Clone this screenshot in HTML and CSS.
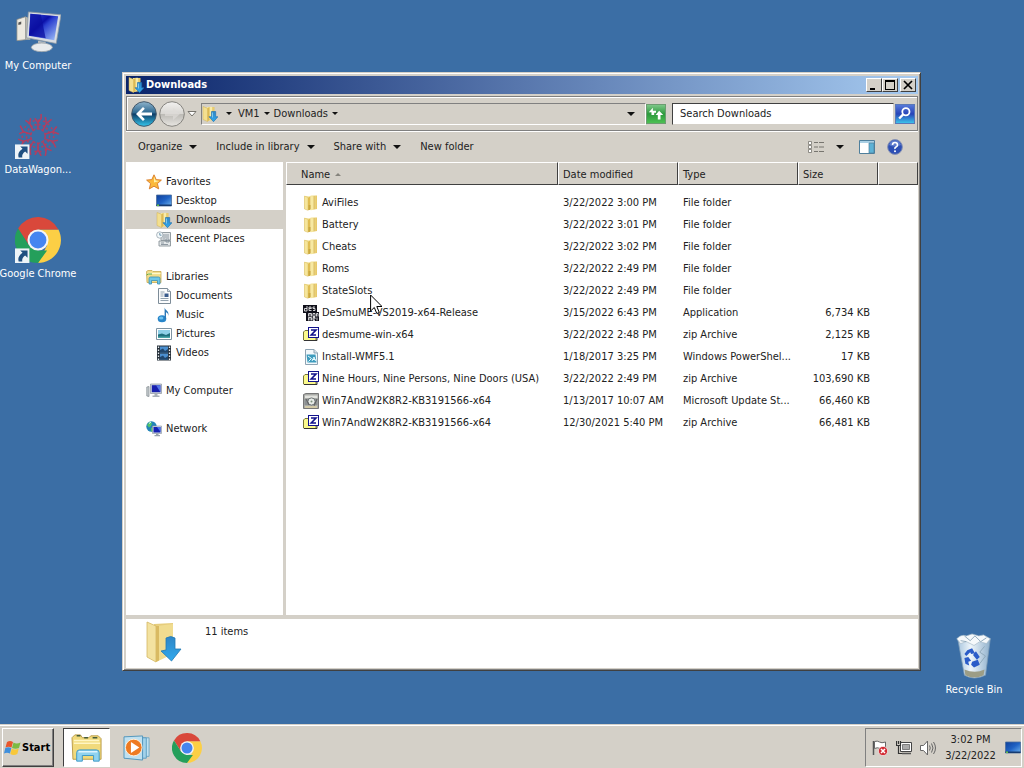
FILE: index.html
```html
<!DOCTYPE html>
<html lang="en">
<head>
  <meta charset="UTF-8">
  <meta name="viewport" content="width=device-width, initial-scale=1.0">
  <title>Downloads</title>
  <link rel="stylesheet" href="styles.css">
</head>
<body>

  <!-- Icon sprite -->
  <svg class="sprite" aria-hidden="true">
    <defs>
      <linearGradient id="gFolder" x1="0" x2="1" y1="0" y2="0">
        <stop offset="0" stop-color="#f7e9a4"/><stop offset="1" stop-color="#e6c766"/>
      </linearGradient>
      <linearGradient id="gArrow" x1="0" x2="0" y1="0" y2="1">
        <stop offset="0" stop-color="#2f86c6"/><stop offset="1" stop-color="#2fa9ee"/>
      </linearGradient>
      <linearGradient id="gScreen" x1="0" x2="1" y1="0" y2="1">
        <stop offset="0" stop-color="#3d5be8"/><stop offset=".4" stop-color="#0a0fa8"/><stop offset=".5" stop-color="#2a3fd0"/><stop offset="1" stop-color="#a8c8fa"/>
      </linearGradient>
      <linearGradient id="gBack" x1="0" x2="0" y1="0" y2="1">
        <stop offset="0" stop-color="#8fb4cc"/><stop offset=".45" stop-color="#2d6890"/><stop offset=".5" stop-color="#0d3c66"/><stop offset="1" stop-color="#35c8ee"/>
      </linearGradient>
      <linearGradient id="gFwd" x1="0" x2="0" y1="0" y2="1">
        <stop offset="0" stop-color="#f2f1ef"/><stop offset=".48" stop-color="#d9d7d3"/><stop offset=".52" stop-color="#bdbbb6"/><stop offset="1" stop-color="#e8e6e2"/>
      </linearGradient>
      <linearGradient id="gBin" x1="0" x2="1" y1="0" y2="0">
        <stop offset="0" stop-color="#a9c6df"/><stop offset=".4" stop-color="#eef5fa"/><stop offset="1" stop-color="#8fb0cc"/>
      </linearGradient>
      <linearGradient id="gDesk" x1="0" x2="1" y1="0" y2="1">
        <stop offset="0" stop-color="#0f3f9a"/><stop offset=".5" stop-color="#1f62c4"/><stop offset="1" stop-color="#6fb4ee"/>
      </linearGradient>
    </defs>

    <symbol id="folder" viewBox="0 0 16 16">
      <path d="M1.500 1L7 1.500V15l-5.500-1z" fill="#f3e08e"/>
      <path d="M7.500.5H14v13.500l-6.500 1.200z" fill="url(#gFolder)"/>
      <path d="M1.500 1l3.500 1.500v12.800L1.500 14z" fill="#f6e69c" stroke="#d9bd62" stroke-width=".5"/>
      <path d="M5 3l2.500-2v13L5 15.300z" fill="#e0bd52"/>
      <path d="M8 2l3-1v13l-3 1.200z" fill="#f7e9a2"/>
      <path d="M11 1v13.200" stroke="#cfae50" stroke-width=".7"/>
      <path d="M5.500 10h2v4.500l-2 .7z" fill="#c9a840"/>
    </symbol>

    <symbol id="folder-down" viewBox="0 0 16 16">
      <path d="M5 1h7.500v13L5 15.300z" fill="url(#gFolder)"/>
      <path d="M7.500.8h2.500v12H7.500z" fill="#f8ebaa"/>
      <path d="M1 .5l4.500 1.800v13.200L1 13.500z" fill="#f3df90" stroke="#d2b253" stroke-width=".5"/>
      <path d="M5.500 2.300L7.500 1v13l-2 1.500z" fill="#dcb954"/>
      <path d="M9.500 5.500h4.200v5.200H16l-4.500 5-4.500-5h2.500z" fill="url(#gArrow)" stroke="#1b6fae" stroke-width=".6"/>
      <path d="M10.500 6.500v5" stroke="#8fd4f6" stroke-width=".8"/>
    </symbol>

    <symbol id="zip" viewBox="0 0 16 16">
      <path d="M.5 13V5L2 3.500h3L6.500 5H13v8.500H1z" fill="#fbf98c" stroke="#77763a"/>
      <path d="M1 13.500h13V10" fill="none" stroke="#333"/>
      <rect x="5.500" y=".5" width="10" height="10" fill="#fff" stroke="#12128c"/>
      <path d="M8 3h5L8.200 8H13" fill="none" stroke="#12128c" stroke-width="1.600"/>
    </symbol>

    <symbol id="des" viewBox="0 0 16 16">
      <path d="M0 0h14v7h2v9H3V8H0z" fill="#10101a"/>
      <path d="M4 1v5H1.500V3.500H4M8.500 3.500H6v2h2.500M6 3.500V2h2v1.500M12 2H10v1.500h2v2h-2M5.500 11.500v-3h3v3M7 8.500v3M10 8.500h2v3h-2zM13.500 11.500v-3H15v3M5.500 15.500v-3h3v3M7 12.500v3M12 14h-2v1.500h2M10 14v-1.500h2V14M14 12.500v3" fill="none" stroke="#fff" stroke-width=".8"/>
    </symbol>

    <symbol id="script" viewBox="0 0 16 16">
      <path d="M2.500.5h8.500l3.500 3.500v11.500h-12z" fill="#f3f8fb" stroke="#8da3b3"/>
      <path d="M11 .5V4h3.500" fill="#d5e2ea" stroke="#8da3b3"/>
      <path d="M3.500 5.500h9l1 8h-9z" fill="#3d9bbd"/>
      <path d="M5 7l3.500 2.500L5.500 12.500M9 12l2-4 1.500 4M9.500 10.500h3" fill="none" stroke="#e6fbff"/>
    </symbol>

    <symbol id="update" viewBox="0 0 16 16">
      <path d="M.5 1.500L3 .5h12.500v15H.5z" fill="#aaaca8" stroke="#777"/>
      <path d="M2 2.500h12.500V5H2z" fill="#e2e3de"/>
      <path d="M1.500 6h13v6h-13z" fill="#8c9092"/>
      <circle cx="8.500" cy="8.500" r="3.600" fill="#e8ece8" stroke="#707678"/>
      <circle cx="8.500" cy="8.500" r="1" fill="#7a8c78"/>
      <path d="M2 13h12v2H2z" fill="#d2c9a6"/>
      <path d="M3 6l3 6M11 13l3-7" stroke="#555" stroke-width=".8"/>
    </symbol>

    <symbol id="star" viewBox="0 0 16 16">
      <path d="M8 .8l2.200 4.800 5.200.5-4 3.500 1.300 5.300L8 12.200l-4.700 2.700 1.300-5.300-4-3.500 5.200-.5z" fill="#fbb93a" stroke="#d87a28" stroke-width=".9"/>
      <path d="M8 2.500l1.600 4 3.800.4L8 8.500z" fill="#fff0a8"/>
    </symbol>

    <symbol id="desktop" viewBox="0 0 16 16">
      <path d="M.5 2h15v11H.5z" fill="url(#gDesk)" stroke="#4d6f9c" stroke-width=".8"/>
      <path d="M.5 11.500h15V13H.5z" fill="#173b70"/>
      <path d="M1 11.500h2V13H1z" fill="#66c24a"/>
    </symbol>

    <symbol id="recent" viewBox="0 0 16 16">
      <path d="M5 1.500h9.500v8H5zM3 10h11.500v5H3z" fill="#e4e8ea" stroke="#8a949a" stroke-width=".9"/>
      <path d="M6.500 4h6.500M6.500 6h6.500M6.500 8h3M5 12h3M5 13.500h7M10 8h3v3h-3z" fill="none" stroke="#84909a" stroke-width=".9"/>
      <circle cx="3.800" cy="4" r="3.200" fill="#f4fafc" stroke="#9aa6ae" stroke-width=".8"/>
      <path d="M3.800 2v2.200h1.700" fill="none" stroke="#4c7d9a" stroke-width=".8"/>
    </symbol>

    <symbol id="library" viewBox="0 0 16 16">
      <path d="M.5 2.500L2 1.500h4l1 1h8v11H1z" fill="#f2dd8a" stroke="#c8a850" stroke-width=".8"/>
      <path d="M2 4.500h12.500" stroke="#fff8cc" stroke-width="1.200"/>
      <path d="M3 15V9.500Q3 8 4.500 8h8Q14 8 14 9.500V15h-2.500v-3.500h-6V15z" fill="#6fc7e6" stroke="#3a8fb4" stroke-width=".8"/>
      <path d="M.5 6l2-1h3.500" fill="none" stroke="#5cab48"/>
    </symbol>

    <symbol id="document" viewBox="0 0 16 16">
      <path d="M2.500.5h9l3 3v12h-12z" fill="#fbfcfd" stroke="#7d8c98"/>
      <path d="M11.500.5v3h3" fill="#dbe3e9" stroke="#7d8c98" stroke-width=".8"/>
      <path d="M4.500 4h4M4.500 6h3M4.500 8h3M4.500 10.500h8M4.500 12.500h8" stroke="#8797a6" stroke-width=".9"/>
      <path d="M8.500 5.500h4v3.500h-4z" fill="#3a5b8c"/>
    </symbol>

    <symbol id="music" viewBox="0 0 16 16">
      <ellipse cx="6" cy="11.800" rx="4.300" ry="3.500" fill="#2785c9"/>
      <ellipse cx="5.200" cy="11" rx="2.200" ry="1.500" fill="#6dc1ef"/>
      <path d="M8.600 12V.5c.5 3 5.400 3.800 3.400 8.500.3-2.500-.5-3.300-2-3.800V12z" fill="#2b79b8"/>
    </symbol>

    <symbol id="picture" viewBox="0 0 16 16">
      <path d="M.5 2.500h15v11H.5z" fill="#fff" stroke="#7f94a2"/>
      <path d="M2 4h12v8H2z" fill="#8fd0e8"/>
      <path d="M2 8.500l4-1 4 1.500 4-2V12H2z" fill="#1f6f7d"/>
      <path d="M2 10.500h12V12H2z" fill="#4aa7a8"/>
    </symbol>

    <symbol id="video" viewBox="0 0 16 16">
      <path d="M1 .5h14v15H1z" fill="#26303a"/>
      <path d="M4 1.500h8v6H4zM4 8.500h8v6H4z" fill="#4b8fd0"/>
      <path d="M4 5l3-1.500 2 2.500 3-2v3.500H4zM4 12l3-1.500 2 2.500 3-2v3.500H4z" fill="#20466c"/>
      <path d="M2.500 1.500v14M13.500 1.500v14" stroke="#e8eef2" stroke-width="1.300" stroke-dasharray="1.500 1.500"/>
    </symbol>

    <symbol id="computer" viewBox="0 0 16 16">
      <path d="M.8 4L3 3.500v10L.8 13z" fill="#c7ccd0" stroke="#7e868c" stroke-width=".7"/>
      <path d="M4.500 1h11v9.500h-11z" fill="#cdd3da" stroke="#8b95a0" stroke-width=".7"/>
      <path d="M5.800 2.200h8.600v7H5.800z" fill="#171fae"/>
      <path d="M10 2.200h4.400v7z" fill="#5577e6"/>
      <path d="M8.500 10.500h3v2h2V14h-7v-1.500h2z" fill="#a8b0b8"/>
    </symbol>

    <symbol id="network" viewBox="0 0 16 16">
      <circle cx="5.500" cy="5.500" r="5.200" fill="#2384b8"/>
      <path d="M1 4l3-3.500 2 1.500-1 3-2 1.500zM5 7l3-1v4l-3 .5z" fill="#4fc46a"/>
      <path d="M3 2.500l2-1.500" stroke="#d8f6fc"/>
      <path d="M6.500 5h9v7.500h-9z" fill="#d3dae2" stroke="#8591a0" stroke-width=".6"/>
      <path d="M7.500 6h7v5.500h-7z" fill="#1522b4"/>
      <path d="M11 6h3.500v5z" fill="#4a72ea"/>
      <path d="M10 12.500h2.500V14H14v1.200H8.500V14H10z" fill="#98a2ac"/>
    </symbol>

    <symbol id="chrome" viewBox="0 0 48 48">
      <path d="M24 13h21.300A24 24 0 0 1 24 48l9.500-18.500z" fill="#fccf45"/>
      <path d="M3.200 12A24 24 0 0 1 45.300 13H24L14.500 29.500z" fill="#d9483b"/>
      <path d="M3.200 12l11.300 17.500L24 35h9.500L24 48A24 24 0 0 1 3.200 12z" fill="#249f5b"/>
      <circle cx="24" cy="24" r="11" fill="#f5f5f5"/>
      <circle cx="24" cy="24" r="8.800" fill="#4585f0"/>
    </symbol>

    <symbol id="shortcut" viewBox="0 0 14 14">
      <path d="M0 0h14v14H0z" fill="#eef4f8"/>
      <path d="M5 2h7v7L9.700 6.800C7.500 8.500 6.500 10 7 12.500H3.500C2.500 9 4 6.500 7.200 4.300z" fill="#1f4f80"/>
    </symbol>

    <symbol id="caret" viewBox="0 0 8 4">
      <path d="M0 0h8L4 4z" fill="#111"/>
    </symbol>
  </svg>

  <main class="desktop">

    <a class="desk-icon my-computer" href="#">
      <svg viewBox="0 0 48 44">
        <path d="M2 9l9-3v24l-9 1z" fill="#ece9e0" stroke="#8a8a84" stroke-width=".8"/>
        <path d="M11 6l5 2v22l-5 0z" fill="#b9b7ae"/>
        <path d="M3.500 12l3-1v3l-3 .8z" fill="#555"/>
        <path d="M14 1l34 3-5 30-31-6z" fill="#d8dde2" stroke="#8f99a2" stroke-width=".8"/>
        <path d="M16 3l29 2.600-4 25-26.500-4.600z" fill="url(#gScreen)"/>
        <path d="M16 3l11 1 5 24.500-17-3z" fill="#0b0fa0" opacity=".75"/>
        <path d="M24 31l8 1.500v4h-8z" fill="#b5bbc0"/>
        <ellipse cx="28" cy="38" rx="11" ry="4.500" fill="#e8ebed" stroke="#959ea5" stroke-width=".8"/>
      </svg>
      <span>My Computer</span>
    </a>

    <a class="desk-icon datawagon" href="#">
      <svg viewBox="0 0 44 44">
        <g fill="none" stroke="#b13e60" stroke-width="1.500">
          <circle cx="22" cy="22" r="7" stroke-dasharray="3 1.500"/>
          <circle cx="22" cy="22" r="11" stroke-dasharray="2 2"/>
          <circle cx="22" cy="22" r="15" stroke-dasharray="2 3"/>
          <path d="M22 15V9l-3-4M22 9l3-4V1M17 16l-3-6 1-5M14 10l-4-3M27 16l3-6-1-6M30 10l5-4M15 20L8 18 4 20M8 18l-3-6M29 20l7-2 4-5M36 18l6 2"/>
          <path d="M15 25l-7 2-5-2M8 27l-2 5M29 25l7 2 5-1M36 27l3 6M17 28l-3 6-5 2M14 34l1 6M27 28l3 6 5 2M30 34l-1 7M22 29v6l-3 5M22 35l3 6"/>
        </g>
        <use href="#shortcut" x="0" y="30" width="14" height="14"/>
      </svg>
      <span>DataWagon...</span>
    </a>

    <a class="desk-icon google-chrome" href="#">
      <svg viewBox="0 0 44 44">
        <use href="#chrome" x="0" y="0" width="44" height="44"/>
        <use href="#shortcut" x="0" y="30" width="14" height="14"/>
      </svg>
      <span>Google Chrome</span>
    </a>

    <a class="desk-icon recycle-bin" href="#">
      <svg viewBox="0 0 44 48">
        <path d="M5 6l34 0-5 38q-12 6-22 0z" fill="url(#gBin)" stroke="#7e9cb6" stroke-width=".8"/>
        <path d="M4 6q5-5 10-3l6-2 7 2 5-1 7 4-4 5-7-2-6 4-8-4-6 2z" fill="#f6f9fb" stroke="#a5bac9" stroke-width=".7"/>
        <path d="M12 3l6 5 5-5 6 6 6-4M8 8l6 1M33 14l-5 6 6 4-6 8" fill="none" stroke="#8ea8ba"/>
        <path d="M12 38q11 5 21 0l-1 6q-10 5-19 0z" fill="#9c9d86"/>
        <path d="M15 18l5-2 3 5-4 1-1-2-4 4-2-2zM24 19l4 6-3 3-4-5zM12 26l4-1 3 4-3 1 1 4-4-2zM20 30l6-2 2 5-6 3-3-3z" fill="#2b5cc8"/>
      </svg>
      <span>Recycle Bin</span>
    </a>

    <section class="window">
      <header class="title-bar">
        <svg class="icon16"><use href="#folder-down"/></svg>
        <h1>Downloads</h1>
        <div class="window-buttons">
          <button aria-label="Minimize"><svg viewBox="0 0 12 10"><path d="M2 8h5v2H2z"/></svg></button>
          <button aria-label="Maximize"><svg viewBox="0 0 12 10"><path d="M1 0h10v10H1zM2 2v7h8V2z" fill-rule="evenodd"/></svg></button>
          <button class="close" aria-label="Close"><svg viewBox="0 0 12 10"><path d="M2 1l8 8M10 1L2 9" stroke="#000" stroke-width="1.700"/></svg></button>
        </div>
      </header>

      <!-- Navigation -->
      <nav class="nav-bar">
        <button class="round" aria-label="Back">
          <svg viewBox="0 0 26 26"><circle cx="13" cy="13" r="12.300" fill="url(#gBack)" stroke="#44586a"/><path d="M5 13l7-7 1.800 1.800L10.300 11.500H21v3H10.300l3.500 3.700L12 20z" fill="#fff"/></svg>
        </button>
        <button class="round" aria-label="Forward">
          <svg viewBox="0 0 26 26"><circle cx="13" cy="13" r="12.300" fill="url(#gFwd)" stroke="#85837e"/><path d="M21 13l-7-6v4H6v4h8v4z" fill="#dedcd8" opacity=".7"/></svg>
        </button>
        <button class="history" aria-label="Recent pages">
          <svg viewBox="0 0 10 6"><path d="M1 .5h8L5 5z" fill="#fff" stroke="#77756f"/></svg>
        </button>
        <div class="address">
          <svg class="icon16"><use href="#folder-down"/></svg>
          <button class="root" aria-label="Locations"><svg class="crumb-caret"><use href="#caret"/></svg></button>
          <button>VM1 <svg class="crumb-caret"><use href="#caret"/></svg></button>
          <button>Downloads <svg class="crumb-caret"><use href="#caret"/></svg></button>
          <button class="address-drop" aria-label="Previous locations"><svg class="caret"><use href="#caret"/></svg></button>
        </div>
        <button class="refresh" aria-label="Refresh">
          <svg viewBox="0 0 20 20"><path d="M2 8l4.500-5v3.500H10v2H8V11H5V8zM18 11l-4.500-4.500L9.500 11H12v5h3v-5z" fill="#fff"/></svg>
        </button>
        <input class="search" type="text" placeholder="Search Downloads" aria-label="Search Downloads">
        <button class="search-button" aria-label="Search">
          <svg viewBox="0 0 20 20"><circle cx="11" cy="7.500" r="4" fill="none" stroke="#fff" stroke-width="2"/><path d="M8 10.500L3.500 15" stroke="#fff" stroke-width="2.600"/></svg>
        </button>
      </nav>

      <!-- Commands -->
      <div class="command-bar">
        <button>Organize <svg class="caret"><use href="#caret"/></svg></button>
        <button>Include in library <svg class="caret"><use href="#caret"/></svg></button>
        <button>Share with <svg class="caret"><use href="#caret"/></svg></button>
        <button>New folder</button>
        <div class="view-tools">
          <button aria-label="Change view">
            <svg class="icon16" viewBox="0 0 16 16"><path d="M.5 2.500h3v3h-3zM.5 6.500h3v3h-3zM.5 10.500h3v3h-3z" fill="#fff" stroke="#77756f" stroke-width=".8"/><path d="M6 3.500h4M11 3.500h5M6 8h4M11 8h5M6 12.500h4M11 12.500h5" stroke="#77756f"/></svg>
            <svg class="caret"><use href="#caret"/></svg>
          </button>
          <button aria-label="Preview pane">
            <svg class="icon16" viewBox="0 0 16 16"><path d="M.5 1.500h15v13H.5z" fill="#fff" stroke="#4f7f9c"/><path d="M1 2h14v2H1z" fill="#a9cfe4"/><path d="M10 4h5v10h-5z" fill="#5cb2d6" stroke="#4f7f9c" stroke-width=".7"/></svg>
          </button>
          <button aria-label="Help">
            <svg class="icon16" viewBox="0 0 16 16"><circle cx="8" cy="8" r="7.400" fill="#2d4fb4" stroke="#8893b4"/><path d="M2 6a6.300 6.300 0 0 1 12 0q-6 3-12 0" fill="#7d97dc" opacity=".6"/><path d="M5.500 6Q5.500 3.500 8 3.500T10.500 6Q10.500 7.300 9 8T8 10" fill="none" stroke="#fff" stroke-width="1.600"/><circle cx="8" cy="12.300" r="1" fill="#fff"/></svg>
          </button>
        </div>
      </div>

      <div class="content">
        <aside class="sidebar">
          <ul>
            <li><a href="#"><svg class="icon16"><use href="#star"/></svg>Favorites</a></li>
            <li class="child"><a href="#"><svg class="icon16"><use href="#desktop"/></svg>Desktop</a></li>
            <li class="child selected"><a href="#"><svg class="icon16"><use href="#folder-down"/></svg>Downloads</a></li>
            <li class="child"><a href="#"><svg class="icon16"><use href="#recent"/></svg>Recent Places</a></li>
          </ul>
          <ul>
            <li><a href="#"><svg class="icon16"><use href="#library"/></svg>Libraries</a></li>
            <li class="child"><a href="#"><svg class="icon16"><use href="#document"/></svg>Documents</a></li>
            <li class="child"><a href="#"><svg class="icon16"><use href="#music"/></svg>Music</a></li>
            <li class="child"><a href="#"><svg class="icon16"><use href="#picture"/></svg>Pictures</a></li>
            <li class="child"><a href="#"><svg class="icon16"><use href="#video"/></svg>Videos</a></li>
          </ul>
          <ul>
            <li><a href="#"><svg class="icon16"><use href="#computer"/></svg>My Computer</a></li>
          </ul>
          <ul>
            <li><a href="#"><svg class="icon16"><use href="#network"/></svg>Network</a></li>
          </ul>
        </aside>

        <div class="files">
          <table>
            <thead>
              <tr>
                <th class="col-name">Name <svg class="sort" viewBox="0 0 6 3"><path d="M0 3h6L3 0z" fill="#85837c"/></svg></th>
                <th class="col-date">Date modified</th>
                <th class="col-type">Type</th>
                <th class="col-size">Size</th>
                <th></th>
              </tr>
            </thead>
            <tbody>
              <tr><td><svg class="icon16"><use href="#folder"/></svg>AviFiles</td><td>3/22/2022 3:00 PM</td><td>File folder</td><td></td><td></td></tr>
              <tr><td><svg class="icon16"><use href="#folder"/></svg>Battery</td><td>3/22/2022 3:01 PM</td><td>File folder</td><td></td><td></td></tr>
              <tr><td><svg class="icon16"><use href="#folder"/></svg>Cheats</td><td>3/22/2022 3:02 PM</td><td>File folder</td><td></td><td></td></tr>
              <tr><td><svg class="icon16"><use href="#folder"/></svg>Roms</td><td>3/22/2022 2:49 PM</td><td>File folder</td><td></td><td></td></tr>
              <tr><td><svg class="icon16"><use href="#folder"/></svg>StateSlots</td><td>3/22/2022 2:49 PM</td><td>File folder</td><td></td><td></td></tr>
              <tr><td><svg class="icon16"><use href="#des"/></svg>DeSmuME-VS2019-x64-Release</td><td>3/15/2022 6:43 PM</td><td>Application</td><td>6,734 KB</td><td></td></tr>
              <tr><td><svg class="icon16"><use href="#zip"/></svg>desmume-win-x64</td><td>3/22/2022 2:48 PM</td><td>zip Archive</td><td>2,125 KB</td><td></td></tr>
              <tr><td><svg class="icon16"><use href="#script"/></svg>Install-WMF5.1</td><td>1/18/2017 3:25 PM</td><td>Windows PowerShel...</td><td>17 KB</td><td></td></tr>
              <tr><td><svg class="icon16"><use href="#zip"/></svg>Nine Hours, Nine Persons, Nine Doors (USA)</td><td>3/22/2022 2:49 PM</td><td>zip Archive</td><td>103,690 KB</td><td></td></tr>
              <tr><td><svg class="icon16"><use href="#update"/></svg>Win7AndW2K8R2-KB3191566-x64</td><td>1/13/2017 10:07 AM</td><td>Microsoft Update St...</td><td>66,460 KB</td><td></td></tr>
              <tr><td><svg class="icon16"><use href="#zip"/></svg>Win7AndW2K8R2-KB3191566-x64</td><td>12/30/2021 5:40 PM</td><td>zip Archive</td><td>66,481 KB</td><td></td></tr>
            </tbody>
          </table>
        </div>
      </div>

      <footer class="details">
        <svg viewBox="0 0 36 42">
          <path d="M8 3l19-1v32L9 38z" fill="#e6cd7c"/>
          <path d="M1 1l9 4v36l-9-5z" fill="#f3e2a0" stroke="#d4b862" stroke-width=".8"/>
          <path d="M10 5l17-2v30l-17 8z" fill="#f0dc90"/>
          <path d="M10 5v36l3-1.500V5z" fill="#d9ba62"/>
          <path d="M20 17q5-3 9 0v11h6L25.500 40 15 30l5-1z" fill="url(#gArrow)" stroke="#2178b4" stroke-width=".8"/>
        </svg>
        <span>11 items</span>
      </footer>
    </section>

    <svg class="cursor" viewBox="0 0 12 21"><path d="M.6 1v16l3.700-3.500 2.500 6 2.500-1-2.500-6H12z" fill="#fff" stroke="#000"/></svg>
  </main>

  <footer class="taskbar">
    <button class="start">
      <svg viewBox="0 0 18 18">
        <path d="M3 3q3-2 6 0L7.500 8.500q-3-1.500-6 0z" fill="#e8562c"/>
        <path d="M9.500 3.500q3 2 7 0L15 9q-3.500 1.500-7 0z" fill="#7dbb42"/>
        <path d="M1.300 9q3-1.500 6 0L6 14.500q-3-1.500-6 0z" fill="#3f8fdc"/>
        <path d="M7.800 9.500q3 2 7 0L13.300 15q-3.500 2-7 0z" fill="#f8c83a"/>
      </svg>
      Start
    </button>
    <div class="tasks">
      <button class="task active" aria-label="Windows Explorer">
        <svg viewBox="0 0 34 32">
          <path d="M1 5l3-3h6l2 3h7l2-2h8l3 3v22H2z" fill="#f1da7c" stroke="#b99a46"/>
          <path d="M3 8h27M3 11h28" stroke="#fff6c4" stroke-width="1.500"/>
          <path d="M6 3h4M14 5h4M23 5h5" stroke="#435c3a" stroke-width="1.500"/>
          <path d="M6 30V21q0-3 3-3h18q3 0 3 3v9h-6v-6H12v6z" fill="#8fd3f0" stroke="#3a98c6"/>
          <path d="M8 20h20" stroke="#e2f7ff" stroke-width="1.500"/>
        </svg>
      </button>
      <button class="task" aria-label="Windows Media Player">
        <svg class="player" viewBox="0 0 30 28">
          <path d="M9 3h19v20H9z" fill="#c2e2f2" stroke="#6fa6c4"/>
          <path d="M5 3h20v22H5z" fill="#a3d2ea" stroke="#5b9cc0"/>
          <path d="M1 2l20-1v26L1 25z" fill="#bfe0f0" stroke="#4c92ba"/>
          <circle cx="11.500" cy="13.500" r="9" fill="#ee7a22" stroke="#fff3e2"/>
          <path d="M8.500 7.500l9 6-9 6z" fill="#fff"/>
        </svg>
      </button>
      <button class="task" aria-label="Google Chrome">
        <svg viewBox="0 0 30 30"><use href="#chrome" width="30" height="30"/></svg>
      </button>
    </div>
    <div class="tray">
      <svg class="icon16" viewBox="0 0 16 16">
        <path d="M1.500 1v14" stroke="#555" stroke-width="1.500"/>
        <path d="M2.500 1.500q3-1 5 .5t6 0v7q-3 1-5.500-.5t-5.500 0z" fill="#fff" stroke="#666"/>
        <circle cx="11" cy="11" r="4.600" fill="#d22c34" stroke="#fff" stroke-width=".6"/>
        <path d="M9 9l4 4M13 9l-4 4" stroke="#fff" stroke-width="1.500"/>
      </svg>
      <svg class="icon16" viewBox="0 0 16 16">
        <path d="M4.500 2.500h11v9h-11z" fill="#fff" stroke="#444"/>
        <path d="M6.500 4.500h7v5h-7z" fill="#aaa" stroke="#666" stroke-width=".8"/>
        <path d="M6 13.500h9" fill="none" stroke="#555" stroke-width="1.500"/>
        <path d="M.5 1v4.500h4V1M2.500 5.500V13.500H6M2.500 1v3" fill="none" stroke="#333" stroke-width="1.200"/>
      </svg>
      <svg class="icon16" viewBox="0 0 16 16">
        <path d="M.5 5.500h3l4-4.500v14l-4-4.500h-3z" fill="#fff" stroke="#666"/>
        <path d="M9.500 5.500q1.500 2.500 0 5M11.500 3.500q3 4.500 0 9M13.500 2q4 6 0 12" fill="none" stroke="#666"/>
      </svg>
      <time class="clock" datetime="2022-03-22T15:02">3:02 PM<br>3/22/2022</time>
      <button class="show-desktop" aria-label="Show desktop"><svg class="icon16"><use href="#desktop"/></svg></button>
    </div>
  </footer>

</body>
</html>
```
FILE: styles.css
```css
/* General Reset */
* {
  margin: 0;
  padding: 0;
  box-sizing: border-box;
}

body {
  font-family: 'DejaVu Sans Condensed', 'Noto Sans', sans-serif;
  font-size: 11px;
  line-height: 16px;
  color: #222;
  background: #3b6ea5;
  display: flex;
  flex-direction: column;
  height: 100vh;
  overflow: hidden;
}

button,
input {
  font: inherit;
  color: inherit;
}

button {
  display: flex;
  align-items: center;
  background: none;
  border: none;
}

a {
  color: inherit;
  text-decoration: none;
}

ul {
  list-style: none;
}

svg {
  display: block;
  flex-shrink: 0;
}

.sprite {
  position: absolute;
  width: 0;
  height: 0;
}

.icon16 {
  width: 16px;
  height: 16px;
}

.caret {
  width: 8px;
  height: 4px;
}

.crumb-caret {
  width: 6px;
  height: 3px;
}

/* Desktop */
.desktop {
  position: relative;
  flex: 1;
}

.desk-icon {
  position: absolute;
  width: 76px;
  display: flex;
  flex-direction: column;
  align-items: center;
  gap: 3px;
  color: #fff;
  white-space: nowrap;
}

.desk-icon svg {
  width: 46px;
  height: 46px;
}

.my-computer {
  left: 0;
  top: 9px;
}

.datawagon {
  left: 0;
  top: 113px;
}

.google-chrome {
  left: 0;
  top: 217px;
}

.recycle-bin {
  right: 12px;
  bottom: 26px;
}

/* Explorer window */
.window {
  position: absolute;
  left: 122px;
  right: 103px;
  top: 72px;
  bottom: 53px;
  display: flex;
  flex-direction: column;
  padding: 3px 2px 2px 3px;
  background: #d4d0c8;
  border: 1px solid;
  border-color: #d4d0c8 #404040 #404040 #d4d0c8;
  box-shadow: inset 1px 1px #fff, inset -1px -1px #808080;
}

.title-bar {
  display: flex;
  align-items: center;
  gap: 2px;
  height: 18px;
  padding: 0 2px;
  color: #fff;
  background: linear-gradient(to right, #0a246a, #a6caf0);
}

.title-bar h1 {
  flex: 1;
  font-size: 11px;
}

.window-buttons {
  display: flex;
}

.window-buttons button {
  justify-content: center;
  width: 16px;
  height: 14px;
  background: #d4d0c8;
  border: 1px solid;
  border-color: #fff #404040 #404040 #fff;
}

.window-buttons svg {
  width: 12px;
  height: 10px;
}

.window-buttons .close {
  margin-left: 2px;
}

.nav-bar {
  display: flex;
  align-items: center;
  height: 35px;
  margin-top: 2px;
  padding: 0 2px 0 4px;
  border: 1px solid #808080;
  box-shadow: inset 1px 1px #fff, 0 1px #fff;
}

.round {
  margin-right: 2px;
}

.round svg {
  width: 26px;
  height: 26px;
}

.history {
  margin-right: 4px;
}

.history svg {
  width: 10px;
  height: 6px;
}

.address {
  flex: 1;
  display: flex;
  align-items: center;
  gap: 4px;
  height: 22px;
  padding: 0 10px 0 0;
  border: 1px solid;
  border-color: #808080 #fff #fff #808080;
}

.address button {
  gap: 4px;
}

.address .root {
  margin: 0 2px 0 4px;
}

.address .address-drop {
  margin-left: auto;
}

.refresh {
  width: 20px;
  height: 20px;
  background: linear-gradient(#7cc787, #2d9a3d 50%, #4cc052);
  border: 1px solid #6c9c70;
}

.search {
  width: 222px;
  height: 22px;
  margin: 0 1px 0 6px;
  padding: 0 7px;
  background: #fff;
  border: 1px solid;
  border-color: #404040 #d4d0c8 #d4d0c8 #404040;
}

.search::placeholder {
  color: #222;
  opacity: 1;
}

.search-button {
  width: 20px;
  height: 20px;
  background: linear-gradient(#5578d8, #2844b8 50%, #3cc2ea);
  border: 1px solid #5a78b8;
}

.command-bar {
  display: flex;
  align-items: center;
  gap: 19px;
  height: 31px;
  padding: 0 15px 0 12px;
}

.command-bar button {
  gap: 7px;
}

.view-tools {
  display: flex;
  gap: 12px;
  margin-left: auto;
}

.view-tools button:first-child {
  gap: 12px;
  margin-right: 3px;
}

/* Folder tree and file list */
.content {
  flex: 1;
  display: flex;
  min-height: 0;
  background: #fff;
}

.sidebar {
  width: 160px;
  padding-top: 10px;
  border-right: 3px solid #d4d0c8;
}

.sidebar ul {
  margin-bottom: 19px;
}

.sidebar a {
  display: flex;
  align-items: center;
  gap: 4px;
  height: 19px;
  padding-left: 20px;
}

.sidebar .child a {
  padding-left: 30px;
}

.sidebar .selected {
  background: #d4d0c8;
}

.files {
  flex: 1;
  overflow: hidden;
}

.files table {
  width: 100%;
  table-layout: fixed;
  border-collapse: separate;
  border-spacing: 0;
}

.files th {
  height: 23px;
  padding: 2px 0 0 4px;
  text-align: left;
  font-weight: normal;
  background: #d4d0c8;
  border: 1px solid;
  border-color: #fff #404040 #404040 #fff;
}

.files .col-name {
  width: 272px;
  padding-left: 14px;
}

.files .col-date,
.files .col-type {
  width: 120px;
}

.files .col-size {
  width: 80px;
}

.files .sort {
  display: inline-block;
  width: 6px;
  height: 3px;
  margin-left: 2px;
  vertical-align: middle;
}

.files tbody::before {
  content: "";
  display: table-row;
  height: 7px;
}

.files td {
  height: 22px;
  padding-left: 5px;
  white-space: nowrap;
}

.files td:first-child {
  padding-left: 17px;
}

.files td:nth-child(4) {
  padding-right: 8px;
  text-align: right;
}

.files td svg {
  display: inline-block;
  margin-right: 3px;
  vertical-align: middle;
}

.details {
  display: flex;
  gap: 23px;
  height: 53px;
  padding: 2px 20px;
  background: #fff;
  border-top: 4px solid #d4d0c8;
}

.details svg {
  width: 36px;
  height: 42px;
}

.details span {
  padding-top: 3px;
}

.cursor {
  position: absolute;
  left: 370px;
  top: 294px;
  width: 12px;
  height: 21px;
}

/* Taskbar */
.taskbar {
  display: flex;
  align-items: stretch;
  height: 44px;
  padding: 3px 2px 1px;
  background: #d4d0c8;
  border-top: 1px solid #d4d0c8;
  box-shadow: inset 0 1px #fff;
}

.start {
  width: 52px;
  padding-left: 1px;
  font-weight: bold;
  color: #000;
  border: 1px solid;
  border-color: #fff #404040 #404040 #fff;
  box-shadow: inset -1px -1px #808080;
}

.start svg {
  width: 18px;
  height: 18px;
}

.tasks {
  flex: 1;
  display: flex;
  gap: 3px;
  padding-left: 9px;
}

.task {
  justify-content: center;
  width: 47px;
}

.task svg {
  width: 32px;
  height: 30px;
}

.task .player {
  width: 28px;
  height: 26px;
}

.task.active {
  background: #fff;
  border: 1px solid;
  border-color: #404040 #fff #fff #404040;
}

.tray {
  display: flex;
  align-items: center;
  gap: 8px;
  padding: 0 0 0 6px;
  border: 1px solid;
  border-color: #808080 #fff #fff #808080;
}

.clock {
  width: 53px;
  text-align: center;
}
```
